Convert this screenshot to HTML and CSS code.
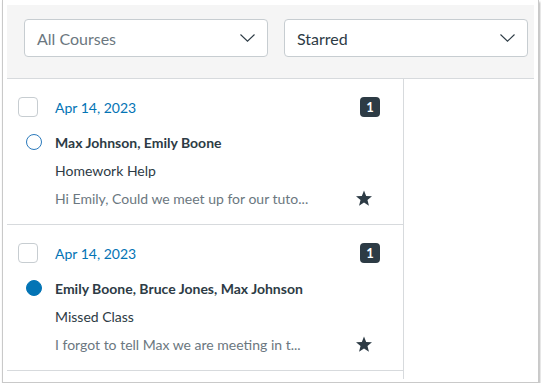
FILE: index.html
```html
<!DOCTYPE html>
<html lang="en">
<head>
    <meta charset="UTF-8">
    <meta name="viewport" content="width=device-width, initial-scale=1.0">
    <title>Inbox</title>
    <link rel="stylesheet" href="styles.css">
</head>
<body>
    <div class="window">
        <div class="filters">
            <div class="select">
                <span class="select-text placeholder">All Courses</span>
                <svg class="chevron" width="15" height="8" viewBox="0 0 15 8"><path d="M0.5 0.5 L7.5 7.2 L14.5 0.5" fill="none" stroke="#2d3b45" stroke-width="1.1"/></svg>
            </div>
            <div class="select">
                <span class="select-text">Starred</span>
                <svg class="chevron" width="15" height="8" viewBox="0 0 15 8"><path d="M0.5 0.5 L7.5 7.2 L14.5 0.5" fill="none" stroke="#2d3b45" stroke-width="1.1"/></svg>
            </div>
        </div>

        <div class="main">
            <div class="conversations">
                <div class="conversation">
                    <div class="conversation-top">
                        <span class="checkbox"></span>
                        <span class="date">Apr 14, 2023</span>
                        <span class="badge">1</span>
                    </div>
                    <div class="conversation-body">
                        <span class="dot"></span>
                        <span class="names">Max Johnson, Emily Boone</span>
                        <span class="subject">Homework Help</span>
                        <span class="preview">Hi Emily, Could we meet up for our tuto...</span>
                        <svg class="star" width="18" height="17" viewBox="0 0 24 23"><path d="M12 0.8 L14.9 8.1 L22.8 8.5 L16.7 13.5 L18.7 21.2 L12 16.9 L5.3 21.2 L7.3 13.5 L1.2 8.5 L9.1 8.1 Z" fill="#2d3b45"/></svg>
                    </div>
                </div>

                <div class="conversation">
                    <div class="conversation-top">
                        <span class="checkbox"></span>
                        <span class="date">Apr 14, 2023</span>
                        <span class="badge">1</span>
                    </div>
                    <div class="conversation-body">
                        <span class="dot unread"></span>
                        <span class="names">Emily Boone, Bruce Jones, Max Johnson</span>
                        <span class="subject">Missed Class</span>
                        <span class="preview">I forgot to tell Max we are meeting in t...</span>
                        <svg class="star" width="18" height="17" viewBox="0 0 24 23"><path d="M12 0.8 L14.9 8.1 L22.8 8.5 L16.7 13.5 L18.7 21.2 L12 16.9 L5.3 21.2 L7.3 13.5 L1.2 8.5 L9.1 8.1 Z" fill="#2d3b45"/></svg>
                    </div>
                </div>
            </div>
            <div class="detail"></div>
        </div>
    </div>
</body>
</html>
```

FILE: styles.css
```css
* {
    margin: 0;
    padding: 0;
    box-sizing: border-box;
}

body {
    font-family: 'Lato', 'Noto Sans', sans-serif;
    color: #2d3b45;
    background: #ffffff;
    overflow: hidden;
}

.window {
    width: 537px;
    height: 383px;
    margin-left: 2px;
    padding: 5px 4px 0 4px;
    border: 1px solid #c9c9c9;
    border-top: none;
    box-shadow: 1px 2px 2px rgba(0, 0, 0, 0.3);
    display: flex;
    flex-direction: column;
}

/* filter bar */
.filters {
    display: flex;
    gap: 16px;
    height: 74px;
    padding: 14px 0 0 17px;
    background: #f5f5f5;
    border-bottom: 1px solid #d7dadd;
}

.select {
    width: 244px;
    height: 38px;
    display: flex;
    align-items: center;
    justify-content: space-between;
    padding: 0 12px;
    background: #ffffff;
    border: 1px solid #c7cdd1;
    border-radius: 4px;
}

.select-text {
    font-size: 16px;
}

.select-text.placeholder {
    color: #6b7780;
}

/* list */
.main {
    display: flex;
    flex: 1;
}

.conversations {
    width: 397px;
    height: 300px;
    border-right: 1px solid #d7dadd;
}

.conversation {
    height: 146px;
    padding: 18px 23px 0 11px;
    border-bottom: 1px solid #d7dadd;
}

.conversation-top {
    display: flex;
    align-items: center;
    height: 20px;
    margin-bottom: 11px;
}

.conversation-body {
    display: grid;
    grid-template-columns: 37px 1fr auto;
    grid-auto-rows: 28px;
    align-items: center;
}

.subject,
.preview {
    grid-column: 2;
}

.checkbox {
    width: 20px;
    height: 20px;
    margin-right: 17px;
    border: 1px solid #c7cdd1;
    border-radius: 4px;
}

.date {
    font-size: 14px;
    color: #0374b5;
}

.badge {
    min-width: 20px;
    height: 20px;
    margin-left: auto;
    padding: 0 6px;
    line-height: 20px;
    font-size: 13px;
    font-weight: 700;
    color: #ffffff;
    background: #2d3b45;
    border-radius: 4px;
    text-align: center;
}

.dot {
    width: 16px;
    height: 16px;
    margin-left: 8px;
    border: 1.5px solid #2b7abc;
    border-radius: 50%;
}

.dot.unread {
    background: #0374b5;
    border-color: #0374b5;
}

.names {
    grid-column: 2 / 4;
    font-size: 14px;
    font-weight: 700;
}

.subject {
    font-size: 14px;
}

.preview {
    font-size: 14px;
    color: #6b7780;
    white-space: nowrap;
}

.star {
    margin-right: 7px;
}

.detail {
    flex: 1;
}
```
